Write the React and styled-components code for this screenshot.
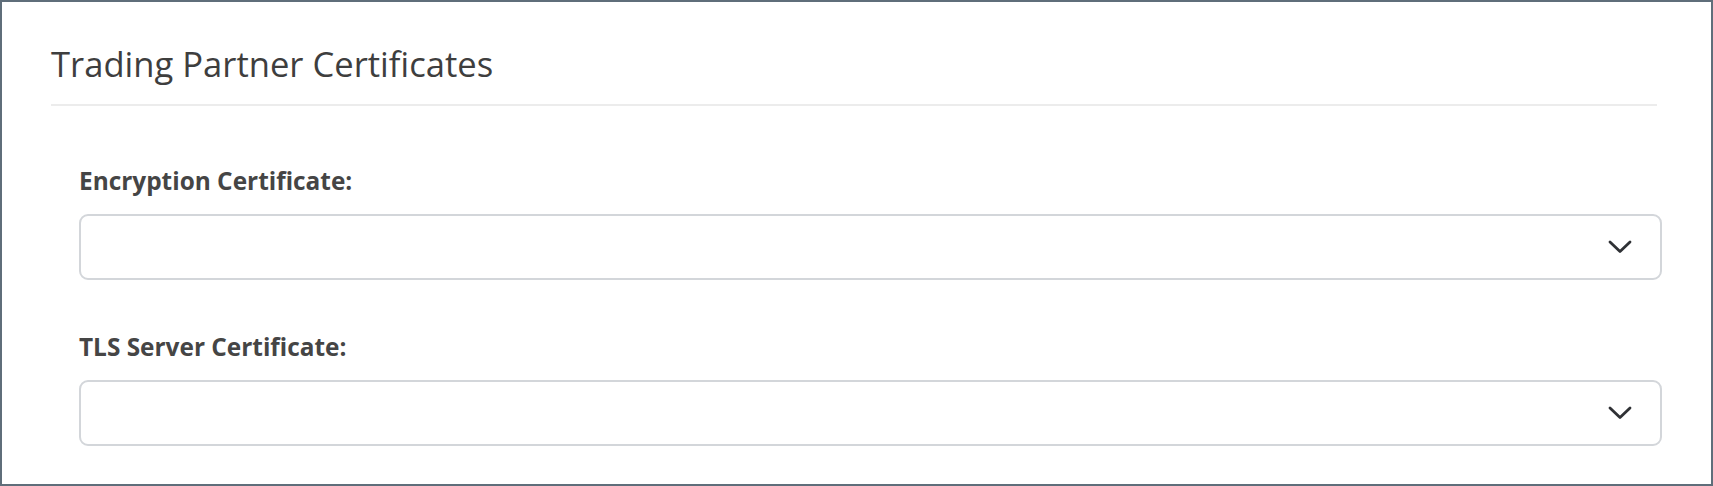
import React from "react";
import styled, { createGlobalStyle } from "styled-components";

const Global = createGlobalStyle`
  html, body { margin: 0; padding: 0; background: #ffffff; }
  * { box-sizing: border-box; }
`;

const Panel = styled.section`
  width: 1713px;
  height: 486px;
  border: 2px solid #5f6e7a;
  background: #ffffff;
  padding: 38px 49px 0 49px;
  font-family: "Open Sans", "Noto Sans", sans-serif;
  color: #444444;
`;

const Header = styled.header`
  margin-right: 5px;
  padding-bottom: 16px;
  border-bottom: 2px solid #ececec;
`;

const Title = styled.h2`
  margin: 0;
  font-size: 34.6px;
  font-weight: 530;
  line-height: 48px;
  color: #3e3e3e;
`;

const Form = styled.div`
  display: flex;
  flex-direction: column;
  gap: 51px;
  padding: 59px 0 0 28px;
`;

const Field = styled.div`
  display: flex;
  flex-direction: column;
  gap: 17px;
`;

const Label = styled.label`
  font-size: 24.4px;
  font-weight: 700;
  line-height: 32px;
  color: #454545;
`;

const SelectBox = styled.div`
  height: 66px;
  border: 2px solid #d3d6da;
  border-radius: 9px;
  background: #ffffff;
  display: flex;
  align-items: center;
  justify-content: flex-end;
  padding-right: 28px;
`;

const Chevron = () => (
  <svg width="24" height="14" viewBox="0 0 24 14" fill="none">
    <path d="M2 2 L12 11.5 L22 2" stroke="#2f3135" strokeWidth="2.8" strokeLinecap="round" strokeLinejoin="round" />
  </svg>
);

const Select = ({ label }) => (
  <Field>
    <Label>{label}</Label>
    <SelectBox>
      <Chevron />
    </SelectBox>
  </Field>
);

export default function App() {
  return (
    <>
      <Global />
      <Panel>
        <Header>
          <Title>Trading Partner Certificates</Title>
        </Header>
        <Form>
          <Select label="Encryption Certificate:" />
          <Select label="TLS Server Certificate:" />
        </Form>
      </Panel>
    </>
  );
}
